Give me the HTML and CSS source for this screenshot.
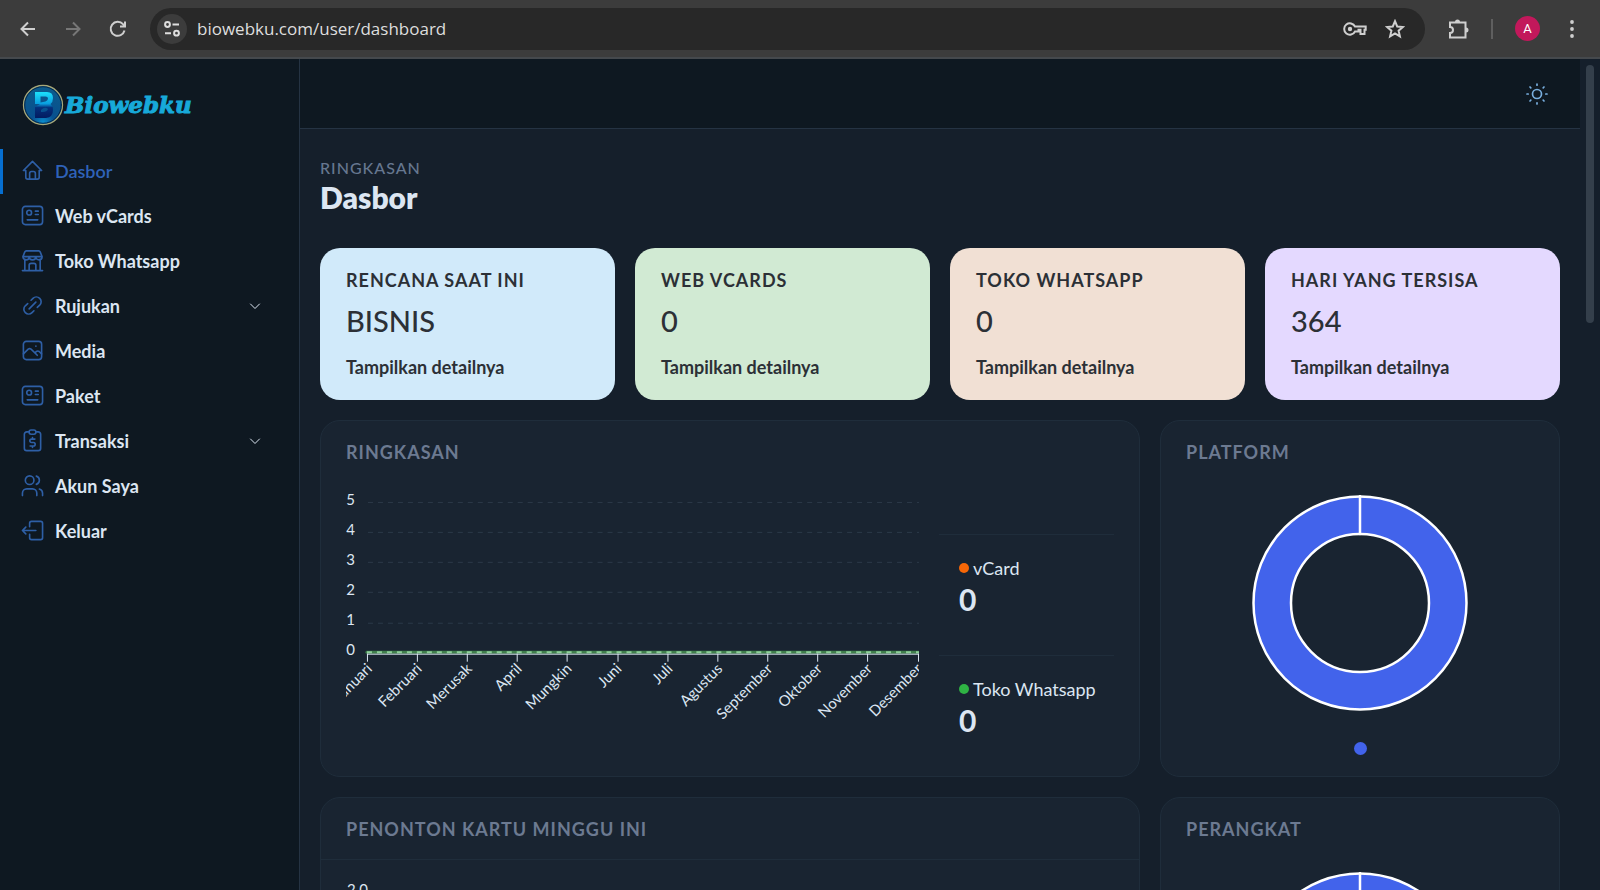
FILE: index.html
```html
<!DOCTYPE html>
<html lang="id">
  <head>
    <meta charset="utf-8">
    <title>Dasbor | Biowebku</title>
    <link rel="stylesheet" href="styles.css">
  </head>

  <body>
    <div class="browser">
      <div class="toolbar">
        <div class="history">
          <button class="tool" aria-label="Back">
            <svg width="20" height="20" viewBox="0 0 20 20"><path d="M17 10H4M10 3.500L3.500 10l6.500 6.500"/></svg>
          </button>
          <button class="tool tool-off" aria-label="Forward">
            <svg width="20" height="20" viewBox="0 0 20 20"><path d="M3 10h13M10 3.500l6.500 6.500-6.500 6.500"/></svg>
          </button>
          <button class="tool" aria-label="Reload">
            <svg width="20" height="20" viewBox="0 0 20 20"><path d="M16.500 11.500A7 7 0 1 1 15 5.200L17 7.300M17 2.500v5h-5"/></svg>
          </button>
        </div>

        <div class="address">
          <button class="site-info" aria-label="Site information">
            <svg width="18" height="18" viewBox="0 0 18 18"><circle cx="4.500" cy="4.500" r="2.400"/><path d="M9.500 4.500H16M2 13.200h6"/><circle cx="13.500" cy="13.200" r="2.400"/></svg>
          </button>
          <input class="url" type="text" aria-label="Address" value="biowebku.com/user/dashboard">
          <button class="tool" aria-label="Passwords">
            <svg width="24" height="20" viewBox="0 0 24 20"><path d="M12 7.500A5.700 5.700 0 1 0 12 12.500h3.500v-1.800h2v4.300h4v-4.300h1.200V7.500z"/><circle class="solid" cx="7" cy="10" r="2.200"/></svg>
          </button>
          <button class="tool" aria-label="Bookmark">
            <svg width="20" height="20" viewBox="0 0 20 20"><path d="M10 2.200l2.200 5.300 5.700.5-4.300 3.700 1.300 5.600-4.900-3-4.900 3 1.300-5.600L2.100 8l5.700-.5z"/></svg>
          </button>
        </div>

        <button class="tool" aria-label="Extensions">
          <svg width="22" height="22" viewBox="0 0 22 22"><path d="M3 4.500h15.500V19.500H3v-4.500a3 3 0 0 0 0-6z"/><path class="solid" d="M8 4a2.300 2.300 0 0 1 5 0zM19 9.500a2.300 2.300 0 0 1 0 5z"/></svg>
        </button>
        <span class="divider"></span>
        <button class="avatar" aria-label="Profile">A</button>
        <button class="tool" aria-label="Menu">
          <svg width="20" height="20" viewBox="0 0 20 20"><g class="solid"><circle cx="10" cy="3" r="1.900"/><circle cx="10" cy="10" r="1.900"/><circle cx="10" cy="17" r="1.900"/></g></svg>
        </button>
      </div>

      <div class="page">
        <aside class="sidebar">
          <a class="brand" href="#">
            <svg class="coin" width="42" height="42" viewBox="0 0 42 42">
              <defs>
                <radialGradient id="coin" cx="50%" cy="95%" r="95%">
                  <stop offset="0" stop-color="#0a8fd0"/>
                  <stop offset=".3" stop-color="#07508f"/>
                  <stop offset="1" stop-color="#0c5c8c"/>
                </radialGradient>
                <linearGradient id="mark" x1="0" y1="0" x2="0" y2="1">
                  <stop offset="0" stop-color="#1ce0fb"/>
                  <stop offset=".45" stop-color="#0a9fe0"/>
                  <stop offset=".6" stop-color="#04307c"/>
                  <stop offset="1" stop-color="#031c60"/>
                </linearGradient>
              </defs>
              <circle cx="21" cy="21" r="19.500" fill="url(#coin)" stroke="#a9a878" stroke-width="1.300"/>
              <circle cx="21" cy="21" r="18.300" fill="none" stroke="#06284a"/>
              <path fill="url(#mark)" fill-rule="evenodd" d="M13 8h12q6 0 6 6 0 4-2.500 6 2.500 2 2.500 6 0 7-7 8H13V23l5-3h-5zM18.500 12.500v6l5-1q2.500-1 2.500-3t-2.500-2zM19 26q4-4 7-1-1 3.500-7 3z"/>
            </svg>
            <span class="brand-name">Biowebku</span>
          </a>

          <nav class="menu">
            <a class="menu-item active" href="#">
              <svg class="icon" viewBox="0 0 24 24"><path d="M5 12H2.500L12 2.500l9.500 9.500H19M5 12v7a2 2 0 0 0 2 2h10a2 2 0 0 0 2-2v-7M9 21v-6a2 2 0 0 1 2-2h2a2 2 0 0 1 2 2v6"/></svg>
              <span>Dasbor</span>
            </a>
            <a class="menu-item" href="#">
              <svg class="icon" viewBox="0 0 24 24"><rect x="1.500" y="2.500" width="21" height="19" rx="3"/><circle cx="8.500" cy="9" r="2.500"/><path d="M15 7.500h3M15 11h3M6.500 16.500h11"/></svg>
              <span>Web vCards</span>
            </a>
            <a class="menu-item" href="#">
              <svg class="icon" viewBox="0 0 24 24"><path d="M1.500 22.500h21M4 22.500V10.500M20 22.500V10.500M2 8l2-5a2 2 0 0 1 1.500-1h13A2 2 0 0 1 20 3l2 5zM2 8a3.300 3.300 0 0 0 6.600 0 3.400 3.400 0 0 0 6.800 0A3.300 3.300 0 0 0 22 8M8.500 22v-5a2 2 0 0 1 2-2h3a2 2 0 0 1 2 2v5"/></svg>
              <span>Toko Whatsapp</span>
            </a>
            <a class="menu-item" href="#">
              <svg class="icon" viewBox="0 0 24 24"><path d="M8.500 15.500l7-7M10.500 6.500l2-2a5 5 0 0 1 7 0 5 5 0 0 1 0 7.200L17 14M13.500 17.500l-2 2a5 5 0 0 1-7 0 5 5 0 0 1 0-7.200L7 10"/></svg>
              <span>Rujukan</span>
              <svg class="chevron" viewBox="0 0 12 12"><path d="M1.500 4L6 8.500 10.500 4"/></svg>
            </a>
            <a class="menu-item" href="#">
              <svg class="icon" viewBox="0 0 24 24"><rect x="2.500" y="2.500" width="19" height="19" rx="3"/><path d="M15.500 7.500h.1M2.500 15.500l5-5q1.500-1 3 0l6.500 6.500M14.500 14.500l1.500-1.500q1.500-1 3 0l2.500 2.500"/></svg>
              <span>Media</span>
            </a>
            <a class="menu-item" href="#">
              <svg class="icon" viewBox="0 0 24 24"><rect x="1.500" y="2.500" width="21" height="19" rx="3"/><circle cx="8.500" cy="9" r="2.500"/><path d="M15 7.500h3M15 11h3M6.500 16.500h11"/></svg>
              <span>Paket</span>
            </a>
            <a class="menu-item" href="#">
              <svg class="icon" viewBox="0 0 24 24"><path d="M8.500 3H6a2.500 2.500 0 0 0-2.500 2.500V20A2.500 2.500 0 0 0 6 22.500h12a2.500 2.500 0 0 0 2.500-2.500V5.500A2.500 2.500 0 0 0 18 3h-2.500"/><rect x="8.500" y="1" width="7" height="4.500" rx="2"/><path d="M14.500 10.500h-3.500a1.800 1.800 0 0 0 0 3.600h2a1.800 1.800 0 0 1 0 3.600H9.500M12 9v1.500M12 17.700v1.500"/></svg>
              <span>Transaksi</span>
              <svg class="chevron" viewBox="0 0 12 12"><path d="M1.500 4L6 8.500 10.500 4"/></svg>
            </a>
            <a class="menu-item" href="#">
              <svg class="icon" viewBox="0 0 24 24"><circle cx="9" cy="6.500" r="4.500"/><path d="M1.500 22.500v-2.500a4.500 4.500 0 0 1 4.500-4.500h6a4.500 4.500 0 0 1 4.500 4.500v2.500M16 2.200a4.500 4.500 0 0 1 0 8.600M22.500 22.500v-2.500a4.500 4.500 0 0 0-3.300-4.300"/></svg>
              <span>Akun Saya</span>
            </a>
            <a class="menu-item" href="#">
              <svg class="icon" viewBox="0 0 24 24"><path d="M9 8V4.500a2 2 0 0 1 2-2h9.500a2 2 0 0 1 2 2v15a2 2 0 0 1-2 2H11a2 2 0 0 1-2-2V16M15.500 12H1.500M5 8.500L1.500 12 5 15.500"/></svg>
              <span>Keluar</span>
            </a>
          </nav>
        </aside>

        <main class="main">
          <header class="topbar">
            <button class="theme" aria-label="Mode terang">
              <svg width="24" height="24" viewBox="0 0 24 24"><circle cx="12" cy="12" r="4.500"/><path d="M12 2v1.200M12 20.800V22M2 12h1.200M20.800 12H22M5 5l.8.8M18.200 18.200l.8.8M5 19l.8-.8M18.200 5.800L19 5"/></svg>
            </button>
          </header>

          <div class="content">
            <div class="page-title">
              <p class="pretitle">Ringkasan</p>
              <h1>Dasbor</h1>
            </div>

            <div class="grid">
              <section class="stat blue">
                <h2>Rencana saat ini</h2>
                <p class="value">BISNIS</p>
                <a href="#">Tampilkan detailnya</a>
              </section>
              <section class="stat green">
                <h2>Web vCards</h2>
                <p class="value">0</p>
                <a href="#">Tampilkan detailnya</a>
              </section>
              <section class="stat peach">
                <h2>Toko Whatsapp</h2>
                <p class="value">0</p>
                <a href="#">Tampilkan detailnya</a>
              </section>
              <section class="stat violet">
                <h2>Hari yang tersisa</h2>
                <p class="value">364</p>
                <a href="#">Tampilkan detailnya</a>
              </section>

              <section class="card wide">
                <h2>Ringkasan</h2>
                <div class="overview">
                  <svg class="chart" viewBox="0 0 574 250">
                    <g class="lines">
                      <path d="M22 24.500H574M22 54.500H574M22 84.500H574M22 114.500H574M22 145.500H574"/>
                    </g>
                    <g class="scale">
                      <text x="9" y="27">5</text>
                      <text x="9" y="57">4</text>
                      <text x="9" y="87">3</text>
                      <text x="9" y="117">2</text>
                      <text x="9" y="147">1</text>
                      <text x="9" y="177">0</text>
                    </g>
                    <path class="series" d="M21 174.500H574"/>
                    <path class="series-dash" d="M21 174.500H574"/>
                    <path class="axis" d="M21 176.500H574M21.500 176v8M71.500 176v8M121.500 176v8M171.500 176v8M221.500 176v8M272.500 176v8M322.500 176v8M372.500 176v8M422.500 176v8M472.500 176v8M522.500 176v8M573.500 176v8"/>
                    <g class="months">
                      <text transform="translate(27 192) rotate(-45)">Januari</text>
                      <text transform="translate(77 192) rotate(-45)">Februari</text>
                      <text transform="translate(127 192) rotate(-45)">Merusak</text>
                      <text transform="translate(177 192) rotate(-45)">April</text>
                      <text transform="translate(227 192) rotate(-45)">Mungkin</text>
                      <text transform="translate(277 192) rotate(-45)">Juni</text>
                      <text transform="translate(328 192) rotate(-45)">Juli</text>
                      <text transform="translate(378 192) rotate(-45)">Agustus</text>
                      <text transform="translate(428 192) rotate(-45)">September</text>
                      <text transform="translate(478 192) rotate(-45)">Oktober</text>
                      <text transform="translate(528 192) rotate(-45)">November</text>
                      <text transform="translate(578 192) rotate(-45)">Desember</text>
                    </g>
                  </svg>

                  <div class="totals">
                    <div class="total">
                      <p><span class="dot orange"></span>vCard</p>
                      <strong>0</strong>
                    </div>
                    <div class="total">
                      <p><span class="dot lime"></span>Toko Whatsapp</p>
                      <strong>0</strong>
                    </div>
                  </div>
                </div>
              </section>

              <section class="card narrow">
                <h2>Platform</h2>
                <div class="donut-box">
                  <svg class="donut" width="216" height="216" viewBox="0 0 216 216"><circle class="ring" cx="108" cy="108" r="88"/><path d="M108 1v38"/><circle cx="108" cy="108" r="106.500"/><circle cx="108" cy="108" r="69"/></svg>
                  <span class="donut-key"></span>
                </div>
              </section>

              <section class="card wide viewers">
                <h2>Penonton kartu minggu ini</h2>
                <p class="tick">2.0</p>
              </section>

              <section class="card narrow">
                <h2>Perangkat</h2>
                <div class="donut-box">
                  <svg class="donut" width="216" height="216" viewBox="0 0 216 216"><circle class="ring" cx="108" cy="108" r="88"/><path d="M108 1v38"/><circle cx="108" cy="108" r="106.500"/><circle cx="108" cy="108" r="69"/></svg>
                  <span class="donut-key"></span>
                </div>
              </section>
            </div>
          </div>
        </main>

        <div class="scrollbar"><div class="thumb"></div></div>
      </div>
    </div>
  </body>
</html>
```
FILE: styles.css
```css
* {
  box-sizing: border-box;
}

body {
  margin: 0;
  font-family: Lato, "Open Sans", sans-serif;
  font-size: 18px;
  line-height: 26px;
  color: #dce6f2;
  background-color: #151f2b;
}

h1,
h2,
p {
  margin: 0;
}

a {
  color: inherit;
  text-decoration: none;
}

button {
  padding: 0;
  border: none;
  background: none;
  cursor: pointer;
}

svg {
  display: block;
  fill: none;
  stroke: currentColor;
  stroke-linecap: round;
  stroke-linejoin: round;
}

.browser {
  display: flex;
  flex-direction: column;
  height: 100vh;
  overflow: hidden;
}

/* browser toolbar */
.toolbar {
  display: flex;
  align-items: center;
  flex-shrink: 0;
  gap: 22px;
  height: 59px;
  padding: 0 18px;
  background-color: #3c3c3c;
  border-bottom: 2px solid #45494d;
}

.history {
  display: flex;
  gap: 25px;
}

.tool {
  color: #cfcfcf;
}

.tool svg,
.site-info svg {
  stroke-width: 2;
  stroke-linecap: butt;
  stroke-linejoin: miter;
}

.tool-off {
  color: #777;
}

.solid {
  fill: currentColor;
  stroke: none;
}

.address {
  display: flex;
  align-items: center;
  flex: 1;
  gap: 18px;
  height: 42px;
  padding: 0 20px 0 7px;
  border-radius: 21px;
  background-color: #282828;
}

.site-info {
  display: flex;
  align-items: center;
  justify-content: center;
  width: 30px;
  height: 30px;
  margin-right: -8px;
  border-radius: 50%;
  color: #dedede;
  background-color: #3c3c3c;
}

.url {
  flex: 1;
  min-width: 0;
  padding: 0;
  border: none;
  outline: none;
  background: none;
  color: #dedede;
  font-family: "Open Sans", sans-serif;
  font-size: 17px;
}

.divider {
  width: 2px;
  height: 20px;
  background-color: #5f5f5f;
}

.avatar {
  width: 25px;
  height: 25px;
  border-radius: 50%;
  color: white;
  background-color: #c2185b;
  font-family: Roboto, sans-serif;
  font-size: 13px;
}

.page {
  display: flex;
  flex: 1;
  min-height: 0;
}

/* sidebar */
.sidebar {
  width: 300px;
  flex-shrink: 0;
  background-color: #0e1821;
  border-right: 1px solid #253343;
}

.brand {
  display: flex;
  align-items: center;
  gap: 1px;
  height: 90px;
  padding: 2px 22px 0;
}

.coin {
  stroke: none;
}

.brand-name {
  color: #17a9d9;
  font-family: "DejaVu Serif", serif;
  font-size: 23px;
  font-weight: bold;
  font-style: italic;
  -webkit-text-stroke: 1px #17a9d9;
}

.menu-item {
  display: flex;
  align-items: center;
  gap: 11px;
  height: 45px;
  padding: 0 38px 2px 18px;
  border-left: 3px solid transparent;
  font-weight: 700;
}

.active {
  color: #2f62b8;
  border-left-color: #066fd1;
  font-weight: 600;
}

.icon {
  width: 23px;
  height: 23px;
  color: #2e5fa6;
  stroke-width: 1.7;
}

.chevron {
  width: 12px;
  height: 12px;
  margin-left: auto;
}

/* main column */
.main {
  flex: 1;
  min-width: 0;
  overflow: hidden;
}

.topbar {
  display: flex;
  align-items: center;
  justify-content: flex-end;
  height: 70px;
  padding: 0 31px;
  background-color: #0e1821;
  border-bottom: 1px solid #253343;
}

.theme {
  color: #78aede;
}

.theme svg {
  stroke-width: 1.7;
}

.content {
  padding: 26px 20px;
}

.pretitle {
  color: #667790;
  font-size: 16px;
  font-weight: 500;
  letter-spacing: 1px;
  text-transform: uppercase;
}

h1 {
  font-size: 30px;
  font-weight: 800;
  line-height: 32px;
}

.grid {
  display: grid;
  grid-template-columns: repeat(12, 1fr);
  gap: 20px;
  margin-top: 35px;
}

h2 {
  color: #6c7a91;
  font-size: 18px;
  font-weight: 700;
  line-height: 26px;
  letter-spacing: 1px;
  text-transform: uppercase;
}

.stat {
  grid-column: span 3;
  padding: 19px 26px 20px;
  border-radius: 20px;
  color: #2c3036;
  font-weight: 700;
}

.stat h2 {
  color: inherit;
}

.value {
  margin: 6px 0 11px;
  font-size: 29px;
  font-weight: 500;
  line-height: 44px;
}

.blue {
  background-color: #d1eafa;
}

.green {
  background-color: #d1ead3;
}

.peach {
  background-color: #f1e0d4;
}

.violet {
  background-color: #e4d9ff;
}

.card {
  min-height: 357px;
  padding: 18px 25px 16px;
  border: 1px solid #1f2d3b;
  border-radius: 20px;
  background-color: #192431;
}

.wide {
  grid-column: span 8;
}

.narrow {
  grid-column: span 4;
}

/* yearly chart */
.overview {
  display: flex;
  align-items: flex-start;
  gap: 20px;
  padding-top: 13px;
}

.chart {
  flex: 1;
  min-width: 0;
}

.chart text {
  fill: #dce6f2;
  stroke: none;
  font-size: 15px;
  text-anchor: end;
}

.lines {
  stroke: #2b3948;
  stroke-dasharray: 5 5;
  stroke-linecap: butt;
}

.series {
  stroke: #3f7f4c;
  stroke-width: 3;
}

.series-dash {
  stroke: #8fd09a;
  stroke-width: 2;
  stroke-dasharray: 5 5;
  stroke-linecap: butt;
}

.axis {
  stroke: #dce6f2;
  stroke-linecap: butt;
}

.totals {
  display: flex;
  flex-direction: column;
  gap: 18px;
  width: 175px;
  padding-top: 56px;
}

.total {
  padding: 20px 0 20px 20px;
  border-top: 1px solid #1f2d3b;
  white-space: nowrap;
}

.total p {
  display: flex;
  align-items: center;
  gap: 4px;
}

.total strong {
  display: block;
  font-size: 30px;
  font-weight: 700;
  line-height: 36px;
}

.dot {
  width: 10px;
  height: 10px;
  border-radius: 50%;
}

.orange {
  background-color: #f76707;
}

.lime {
  background-color: #2fb344;
}

/* donut charts */
.donut-box {
  display: flex;
  flex-direction: column;
  align-items: center;
  gap: 31px;
  padding-top: 30px;
}

.donut {
  stroke: white;
  stroke-width: 2.5;
}

.ring {
  stroke: #4263eb;
  stroke-width: 37;
}

.donut-key {
  width: 13px;
  height: 13px;
  border-radius: 50%;
  background-color: #4263eb;
}

.viewers {
  padding: 0;
}

.viewers h2 {
  padding: 18px 25px 17px;
  border-bottom: 1px solid #1f2d3b;
}

.tick {
  padding: 16px 26px;
  font-size: 15px;
}

/* page scrollbar */
.scrollbar {
  width: 20px;
  padding: 6px;
  flex-shrink: 0;
}

.thumb {
  width: 8px;
  height: 258px;
  border-radius: 4px;
  background-color: #343f4b;
}
```
